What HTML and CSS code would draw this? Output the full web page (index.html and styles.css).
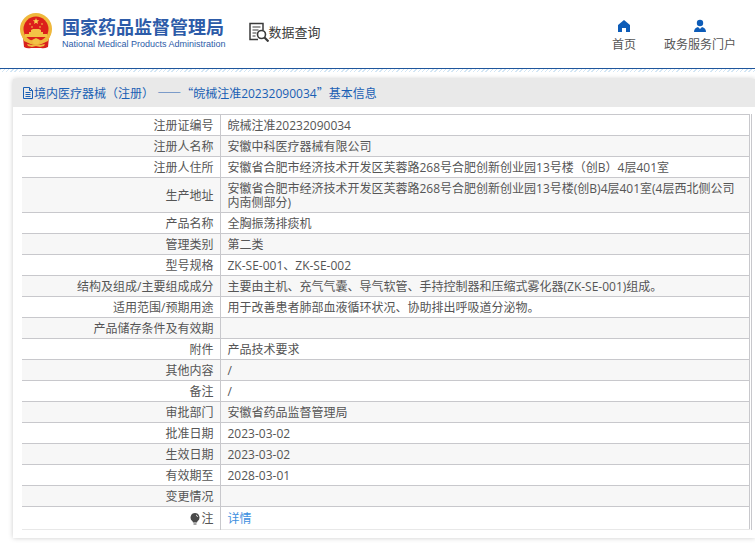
FILE: index.html
```html
<!DOCTYPE html>
<html lang="zh-CN">
<head>
    <meta charset="UTF-8">
    <meta name="viewport" content="width=device-width, initial-scale=1.0">
    <title>国家药品监督管理局 数据查询</title>
    <link rel="stylesheet" href="styles.css">
</head>
<body>
    <!-- Header -->
    <header class="header">
        <svg class="emblem" viewBox="0 0 36 36" aria-hidden="true">
            <path d="M5 24h26l-1 10q-4 2-7 1H13q-4 1-7-1z" fill="#d8201c"/>
            <circle cx="18" cy="16" r="16" fill="#efb83c"/>
            <circle cx="18" cy="16" r="12.500" fill="#dc1f1b"/>
            <path d="M18 5l.9 2.200 2.300.1-1.800 1.500.6 2.300-2-1.300-2 1.300.6-2.300-1.800-1.500 2.300-.1z" fill="#f8d251"/>
            <g fill="#f8d251">
                <circle cx="12" cy="11" r=".8"/>
                <circle cx="14" cy="14" r=".8"/>
                <circle cx="22" cy="14" r=".8"/>
                <circle cx="24" cy="11" r=".8"/>
            </g>
            <path d="M13 17l2-1h6l2 1v2h2v2h4v3H7v-3h4v-2h2z" fill="#f3c246"/>
            <path d="M4 23q6 6 10 4l4-2 4 2q4 2 10-4l-2 5q-5 3-8 1l-4-2-4 2q-3 2-8-1z" fill="#efb83c"/>
            <path d="M14.500 29a3.500 3 0 0 1 7 0l-1.500 2h-4z" fill="#f3c246"/>
            <path d="M9 31l5 1 4-1 4 1 5-1-1 2-4 1-4-1-4 1-4-1z" fill="#efb83c"/>
        </svg>
        <div class="brand">
            <h1 class="brand-name">国家药品监督管理局</h1>
            <p class="brand-en">National Medical Products Administration</p>
        </div>
        <div class="module">
            <svg class="module-icon" viewBox="0 0 20 20" aria-hidden="true" fill="none" stroke="#3b3b3b">
                <path d="M9 17.500H1V1.500h13V8" stroke-width="1.500"/>
                <path d="M3.500 5h8M3.500 8h6M3.500 11h4M3.500 14h3" stroke-width="1.200"/>
                <circle cx="12.500" cy="12.500" r="4" stroke-width="1.600"/>
                <path d="M15.500 15.500l4 4" stroke-width="2.200"/>
            </svg>
            <span>数据查询</span>
        </div>
        <nav class="nav">
            <a class="nav-link" href="#">
                <svg class="nav-icon" viewBox="0 0 14 14" aria-hidden="true"><path d="M7 1l6 5v7H9V9H5v4H1V6z" fill="#0d5cb8"/></svg>
                首页
            </a>
            <a class="nav-link" href="#">
                <svg class="nav-icon" viewBox="0 0 14 14" aria-hidden="true"><circle cx="7" cy="4" r="3.200" fill="#0d5cb8"/><path d="M1 13q0-4 4-5l2 2 2-2q4 1 4 5z" fill="#0d5cb8"/></svg>
                政务服务门户
            </a>
        </nav>
    </header>
    <div class="stripe"></div>

    <!-- Registration details -->
    <main class="panel">
        <h2 class="panel-title">
            <svg class="title-icon" viewBox="0 0 12 12" aria-hidden="true" fill="none" stroke="#1a5fb4"><path d="M1.500 .5h6l3 3v8h-9zM7.500 .5v3h3M3.500 5.500h5M3.500 7.500h5M3.500 9.500h5"/></svg>
            <span>境内医疗器械（注册） <span class="cjk">——“</span>皖械注准20232090034<span class="cjk">”</span>基本信息</span>
        </h2>
        <div class="table-wrap">
            <table class="info">
                <tbody>
                    <tr><th scope="row">注册证编号</th><td>皖械注准20232090034</td></tr>
                    <tr><th scope="row">注册人名称</th><td>安徽中科医疗器械有限公司</td></tr>
                    <tr><th scope="row">注册人住所</th><td>安徽省合肥市经济技术开发区芙蓉路268号合肥创新创业园13号楼（创B）4层401室</td></tr>
                    <tr><th scope="row">生产地址</th><td>安徽省合肥市经济技术开发区芙蓉路268号合肥创新创业园13号楼(创B)4层401室(4层西北侧公司内南侧部分)</td></tr>
                    <tr><th scope="row">产品名称</th><td>全胸振荡排痰机</td></tr>
                    <tr><th scope="row">管理类别</th><td>第二类</td></tr>
                    <tr><th scope="row">型号规格</th><td>ZK-SE-001、ZK-SE-002</td></tr>
                    <tr><th scope="row">结构及组成/主要组成成分</th><td>主要由主机、充气气囊、导气软管、手持控制器和压缩式雾化器(ZK-SE-001)组成。</td></tr>
                    <tr><th scope="row">适用范围/预期用途</th><td>用于改善患者肺部血液循环状况、协助排出呼吸道分泌物。</td></tr>
                    <tr><th scope="row">产品储存条件及有效期</th><td></td></tr>
                    <tr><th scope="row">附件</th><td>产品技术要求</td></tr>
                    <tr><th scope="row">其他内容</th><td>/</td></tr>
                    <tr><th scope="row">备注</th><td>/</td></tr>
                    <tr><th scope="row">审批部门</th><td>安徽省药品监督管理局</td></tr>
                    <tr><th scope="row">批准日期</th><td>2023-03-02</td></tr>
                    <tr><th scope="row">生效日期</th><td>2023-03-02</td></tr>
                    <tr><th scope="row">有效期至</th><td>2028-03-01</td></tr>
                    <tr><th scope="row">变更情况</th><td></td></tr>
                    <tr class="note">
                        <th scope="row"><svg class="note-icon" viewBox="0 0 10 12" aria-hidden="true"><path d="M5 0a4.500 4.500 0 0 1 2.500 8.200L7 9.500H3L2.500 8.200A4.500 4.500 0 0 1 5 0z" fill="#4a4a4a"/><path d="M3.500 11h3" stroke="#4a4a4a"/><path d="M6 2q1.500.5 1.500 2" fill="none" stroke="#ddd"/></svg>注</th>
                        <td><a class="detail" href="#">详情</a></td>
                    </tr>
                </tbody>
            </table>
        </div>
    </main>
</body>
</html>
```

FILE: styles.css
```css
* {
    box-sizing: border-box;
}
body {
    margin: 0;
    background: #fff;
    color: #555;
    font-family: "Open Sans", "Noto Sans CJK SC", sans-serif;
    font-size: 12px;
    line-height: 14px;
}
h1, h2, p {
    margin: 0;
}
a {
    text-decoration: none;
}
.header {
    display: flex;
    align-items: center;
    height: 69px;
    padding: 0 19px 6px 18px;
    border-bottom: 1px solid #1f569c;
}
.stripe {
    height: 3px;
    background: repeating-linear-gradient(135deg, #d3e6f5 0, #d3e6f5 1px, #fff 1px, #fff 3px);
}
.emblem {
    width: 36px;
    height: 36px;
}
.brand {
    margin-left: 8px;
    padding-top: 4px;
    color: #2d5ba8;
}
.brand-name {
    font-size: 18px;
    line-height: 22px;
}
.brand-en {
    font-family: "Liberation Sans", Arial, sans-serif;
    font-size: 9px;
    line-height: 12px;
}
.module {
    display: flex;
    align-items: center;
    margin-left: 23px;
    padding-top: 2px;
    color: #3b3b3b;
    font-size: 13px;
}
.module-icon {
    width: 20px;
    height: 20px;
}
.nav {
    display: flex;
    gap: 28px;
    margin-left: auto;
}
.nav-link {
    display: flex;
    flex-direction: column;
    align-items: center;
    gap: 5px;
    padding-top: 8px;
    color: #555;
}
.nav-icon {
    width: 14px;
    height: 14px;
}
.panel {
    margin: 7px 0 10px 13px;
    padding-bottom: 8px;
    box-shadow: 0 0 5px #ccc;
}
.panel-title {
    display: flex;
    align-items: center;
    height: 28px;
    padding: 0 0 0 9px;
    background: #e9e9e9;
    color: #1a5fb4;
    font-size: 12px;
    font-weight: normal;
}
.cjk {
    font-family: "Noto Sans CJK SC", sans-serif;
}
.title-icon {
    width: 12px;
    height: 12px;
}
.table-wrap {
    margin: 7px 3px 0 9px;
    border-right: 1px solid #c8c8cc;
    padding-right: 1px;
}
.info {
    width: 100%;
    border-collapse: collapse;
    border-right: 1px solid #c8c8cc;
    border-bottom: 1px solid #e8e8e8;
}
.info th, .info td {
    height: 21px;
    padding: 4px 6px 2px;
    border-top: 1px solid #c8c8cc;
    font-weight: normal;
    text-align: left;
}
.info th {
    width: 198px;
    border-right: 1px solid #c8c8cc;
    text-align: right;
}
.info td {
    padding-left: 7px;
}
.info tr:nth-child(even) {
    background: #f7f7f7;
}
.info .note th, .info .note td {
    height: 23px;
}
.note-icon {
    width: 10px;
    height: 12px;
    margin-right: 1px;
    vertical-align: -2px;
}
.detail {
    color: #3d8fe0;
}
```
